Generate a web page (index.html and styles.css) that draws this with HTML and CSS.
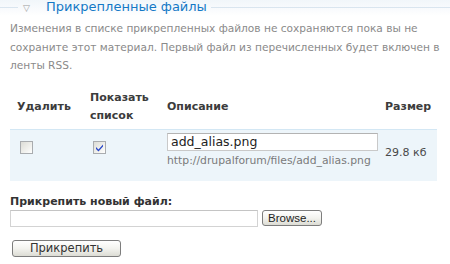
FILE: index.html
```html
<html>
    <head>
        <title>Прикрепленные файлы</title>
        <meta charset="utf-8"/>
        <link rel="stylesheet" href="styles.css">
    </head>
    <body>
        <fieldset class="attach">
            <legend><span class="arrow">&#9661;</span>Прикрепленные файлы</legend>
            <p class="description">Изменения в списке прикрепленных файлов не сохраняются пока вы не сохраните этот материал. Первый файл из перечисленных будет включен в ленты RSS.</p>
            <table class="files">
                <thead>
                    <tr>
                        <th class="c-del">Удалить</th>
                        <th class="c-list">Показать<br/>список</th>
                        <th class="c-desc">Описание</th>
                        <th class="c-size">Размер</th>
                    </tr>
                </thead>
                <tbody>
                    <tr class="odd">
                        <td><input type="checkbox" class="check"/></td>
                        <td><input type="checkbox" class="check" checked/></td>
                        <td>
                            <input type="text" class="desc" value="add_alias.png"/>
                            <div class="url">http://drupalforum/files/add_alias.png</div>
                        </td>
                        <td class="size">29.8 кб</td>
                    </tr>
                </tbody>
            </table>
            <div class="new-file">
                <label class="label">Прикрепить новый файл:</label>
                <div class="file-row">
                    <input type="text" class="file-path"/>
                    <button class="browse">Browse...</button>
                </div>
            </div>
            <button class="submit">Прикрепить</button>
        </fieldset>
    </body>
</html>
```

FILE: styles.css
```css
body {
    margin: 0;
    background: linear-gradient(to bottom, #f1f6fa 0, #f6f9fc 6px, #ffffff 16px);
    font-family: "DejaVu Sans", Verdana, sans-serif;
    font-size: 11px;
    color: #494949;
}
fieldset.attach {
    margin: -1px 0 0 0;
    padding: 0 10px;
    border: 0;
    border-top: 1px solid #d9e5ef;
}
legend {
    margin-left: 8px;
    padding: 0 4px 0 5px;
    font-size: 13px;
    line-height: 15px;
    color: #1479c6;
}
.arrow {
    display: inline-block;
    width: 23px;
    font-size: 9px;
    color: #a0a0a0;
}
p.description {
    margin: 3px -10px 0 0;
    font-size: 10.6px;
    line-height: 18.5px;
    color: #8a8a8a;
}
table.files {
    width: 427px;
    margin-top: 9px;
    border-collapse: collapse;
}
th {
    text-align: left;
    font-size: 11px;
    font-weight: bold;
    line-height: 18px;
    color: #3c3c3c;
    padding: 5px 0 4px 7px;
}
th.c-del {
    width: 66px;
}
th.c-list {
    width: 70px;
}
th.c-desc {
    width: 210px;
}
tr.odd td {
    background: #edf5fa;
    border-top: 1px solid #d3e7f4;
    padding: 3px 0 14px 7px;
    vertical-align: top;
}
input.check {
    -webkit-appearance: none;
    appearance: none;
    display: block;
    width: 13px;
    height: 13px;
    margin: 8px 0 0 3px;
    border: 1px solid #a9acaf;
    background: linear-gradient(135deg, #dcdcd6 0, #f4f4f1 70%, #ffffff 100%);
}
input.check:checked {
    background-image: url("data:image/svg+xml;utf8,<svg xmlns='http://www.w3.org/2000/svg' width='11' height='11'><path d='M2 5 L4.5 7.5 L9 2.5 L9 4.5 L4.5 9.5 L2 7 Z' fill='%232847c9'/></svg>"), linear-gradient(135deg, #dcdcd6 0, #f4f4f1 70%, #ffffff 100%);
}
input.desc {
    display: block;
    box-sizing: border-box;
    width: 211px;
    height: 18px;
    margin: 0;
    padding: 0 3px;
    border: 1px solid #c9c9c9;
    border-top-color: #b3b3b3;
    font-family: "DejaVu Sans", Verdana, sans-serif;
    font-size: 12.5px;
    color: #222;
}
.url {
    margin-top: 3px;
    font-size: 10.8px;
    line-height: 13px;
    color: #7a7a7a;
}
td.size {
    font-size: 11px;
}
tr.odd td.size {
    padding-top: 16px;
}
.new-file {
    margin-top: 14px;
}
.label {
    display: block;
    font-weight: bold;
    font-size: 11px;
    line-height: 14px;
    color: #333;
}
.file-row {
    display: flex;
    align-items: center;
    gap: 4px;
    margin-top: 1px;
}
input.file-path {
    box-sizing: border-box;
    width: 248px;
    height: 17px;
    margin: 0;
    border: 1px solid #d3d3d3;
    border-top-color: #c4c4c4;
}
button {
    box-sizing: border-box;
    border: 1px solid #7d7d7d;
    border-radius: 3px;
    background: linear-gradient(to bottom, #ffffff 0, #f3f3ef 50%, #dcdcd4 100%);
    color: #222;
    padding: 0;
}
button.browse {
    width: 60px;
    height: 16px;
    font-family: "Liberation Sans", Arial, sans-serif;
    font-size: 11.5px;
    line-height: 14px;
}
button.submit {
    display: block;
    width: 109px;
    height: 17px;
    margin: 13px 0 0 2px;
    font-family: "DejaVu Sans", Verdana, sans-serif;
    font-size: 11.5px;
    line-height: 15px;
    color: #333;
}
```
